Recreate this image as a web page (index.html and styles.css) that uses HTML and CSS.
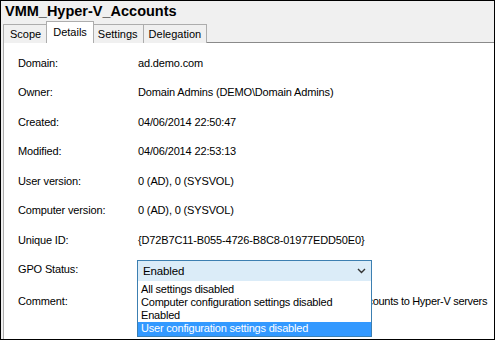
FILE: index.html
```html
<!DOCTYPE html>
<html>
<head>
<meta charset="utf-8">
<link rel="stylesheet" href="styles.css">
</head>
<body>
<div class="frame">
  <div class="head">
    <div class="title">VMM_Hyper-V_Accounts</div>
    <div class="tabs">
      <div class="tab">Scope</div>
      <div class="tab active">Details</div>
      <div class="tab">Settings</div>
      <div class="tab">Delegation</div>
    </div>
  </div>
  <div class="panel">
    <div class="row"><span class="label">Domain:</span><span class="value">ad.demo.com</span></div>
    <div class="row"><span class="label">Owner:</span><span class="value">Domain Admins (DEMO\Domain Admins)</span></div>
    <div class="row"><span class="label">Created:</span><span class="value">04/06/2014 22:50:47</span></div>
    <div class="row"><span class="label">Modified:</span><span class="value">04/06/2014 22:53:13</span></div>
    <div class="row"><span class="label">User version:</span><span class="value">0 (AD), 0 (SYSVOL)</span></div>
    <div class="row"><span class="label">Computer version:</span><span class="value">0 (AD), 0 (SYSVOL)</span></div>
    <div class="row"><span class="label">Unique ID:</span><span class="value">{D72B7C11-B055-4726-B8C8-01977EDD50E0}</span></div>
    <div class="row">
      <span class="label">GPO Status:</span>
      <div class="combo">
        <div class="select">
          <span>Enabled</span>
          <svg class="chev" width="9" height="6" viewBox="0 0 9 6"><path d="M1 1 L4.5 4.5 L8 1" fill="none" stroke="#333" stroke-width="1.4"/></svg>
        </div>
        <div class="list">
          <div class="opt">All settings disabled</div>
          <div class="opt">Computer configuration settings disabled</div>
          <div class="opt">Enabled</div>
          <div class="opt sel">User configuration settings disabled</div>
        </div>
      </div>
    </div>
    <div class="row comment"><span class="label">Comment:</span><span class="value comment-text">Applies all of the VMM Hyper-V Run As service accounts to Hyper-V servers</span></div>
  </div>
</div>
</body>
</html>
```
FILE: styles.css
```css
* { box-sizing: border-box; }
html, body { margin: 0; padding: 0; }
body {
  width: 495px;
  height: 340px;
  overflow: hidden;
  font-family: "Liberation Sans", Arial, sans-serif;
  color: #000;
}
.frame {
  width: 495px;
  height: 340px;
  border: 1px solid #000;
  background: #f0f0f0;
  display: flex;
  flex-direction: column;
  overflow: hidden;
}
.head {
  padding: 0 0 0 2px;
}
.title {
  font-weight: bold;
  font-size: 14.5px;
  line-height: 20px;
  padding-left: 2px;
  height: 20px;
}
.tabs {
  display: flex;
  align-items: flex-end;
  height: 22px;
  position: relative;
  z-index: 2;
  margin-bottom: -1px;
}
.tab {
  font-size: 11px;
  height: 19px;
  line-height: 18px;
  padding: 0 5px;
  border: 1px solid #adadad;
  border-bottom: none;
  background: #f0f0f0;
  margin-right: -1px;
}
.tab.active {
  background: #fff;
  height: 22px;
  line-height: 20px;
  padding: 0 6px;
  margin-left: -1px;
  margin-right: -2px;
  position: relative;
  z-index: 3;
}
.tab:first-child { padding: 0 6px; }
.panel {
  flex: 1;
  background: #fff;
  border-top: 1px solid #8a8a8a;
  border-left: 1px solid #adadad;
  margin-left: 2px;
  padding-top: 5px;
  position: relative;
  font-size: 11px;
  letter-spacing: -0.15px;
}
.row {
  display: flex;
  align-items: center;
  height: 29.5px;
  white-space: nowrap;
}
.label {
  width: 134px;
  padding-left: 14px;
  flex: none;
}
.value { flex: none; }
.comment-text { letter-spacing: -0.3px; }
.combo {
  position: relative;
  width: 235px;
  margin-left: -1px;
  margin-top: 3px;
}
.select {
  height: 22px;
  border: 1px solid #3c7fb1;
  background: #dbecf8;
  display: flex;
  align-items: center;
  justify-content: space-between;
  padding: 0 5px 0 5px;
  font-size: 11.5px;
}
.list {
  position: absolute;
  left: 0;
  top: 21px;
  width: 235px;
  background: #fff;
  border: 1px solid #3c7fb1;
  border-top: none;
  z-index: 5;
  padding-top: 2px;
}
.opt {
  height: 13px;
  line-height: 13px;
  padding-left: 3px;
  font-size: 11px;
  letter-spacing: -0.2px;
}
.opt.sel {
  background: #3399ff;
  color: #fff;
  height: 14px;
}
.comment { margin-top: 2px; }
```
